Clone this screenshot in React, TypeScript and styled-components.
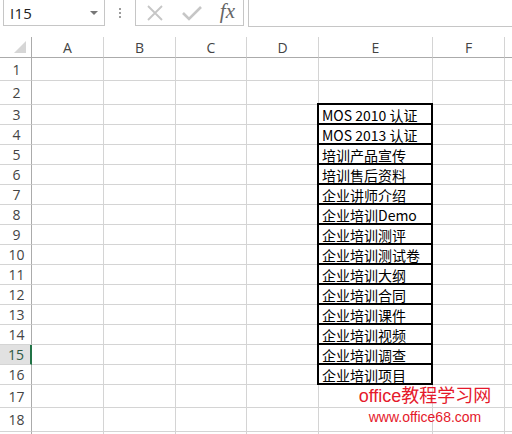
import styled, { createGlobalStyle } from "styled-components";

const GlobalStyle = createGlobalStyle`
  html, body {
    margin: 0;
    padding: 0;
    background: #ffffff;
    overflow: hidden;
  }
`;

// the last column is only a sliver at the window edge, so its letter is not shown
const columns = [
  { name: "A", width: 72 },
  { name: "B", width: 72 },
  { name: "C", width: 71 },
  { name: "D", width: 72 },
  { name: "E", width: 114 },
  { name: "F", width: 72 },
  { name: "", width: 72 },
];

const rowHeights = [23, 24, 20, 20, 20, 20, 20, 20, 20, 20, 20, 20, 20, 20, 20, 20, 23, 24, 20];
const visibleRows = 18;

const values: Record<number, string> = {
  3: "MOS 2010 认证",
  4: "MOS 2013 认证",
  5: "培训产品宣传",
  6: "培训售后资料",
  7: "企业讲师介绍",
  8: "企业培训Demo",
  9: "企业培训测评",
  10: "企业培训测试卷",
  11: "企业培训大纲",
  12: "企业培训合同",
  13: "企业培训课件",
  14: "企业培训视频",
  15: "企业培训调查",
  16: "企业培训项目",
};

const selectedRow = 15;

export default function App() {
  return (
    <>
      <GlobalStyle />
      <Page>
        <FormulaBar>
          <NameBox>
            <NameText>I15</NameText>
            <DropArrow />
          </NameBox>
          <Grip>
            <Dot />
            <Dot />
            <Dot />
          </Grip>
          <ButtonBox>
            <ToolIcon width="20" height="20" viewBox="0 0 20 20">
              <path d="M3 3 L17 17 M17 3 L3 17" stroke="#c6c6c6" strokeWidth="1.8" fill="none" />
            </ToolIcon>
            <ToolIcon width="22" height="20" viewBox="0 0 22 20">
              <path d="M2 10 L8 16 L20 4" stroke="#c6c6c6" strokeWidth="2.6" fill="none" />
            </ToolIcon>
            <FxLabel>fx</FxLabel>
          </ButtonBox>
          <FormulaInput />
        </FormulaBar>

        <Sheet
          style={{
            gridTemplateColumns: `32px ${columns.map((c) => `${c.width}px`).join(" ")}`,
            gridTemplateRows: `21px ${rowHeights.map((h) => `${h}px`).join(" ")}`,
          }}
        >
          <CornerCell>
            <svg width="14" height="14" viewBox="0 0 14 14">
              <polygon points="13,1 13,13 1,13" fill="#d6d6d6" />
            </svg>
          </CornerCell>
          {columns.map((c, i) => (
            <ColHeader key={`c${i}`}>{c.name}</ColHeader>
          ))}
          {rowHeights.map((_, i) => {
            const row = i + 1;
            return [
              <RowHeader key={`h${row}`} $selected={row === selectedRow}>
                {row <= visibleRows ? row : ""}
              </RowHeader>,
              ...columns.map((c, ci) =>
                c.name === "E" && values[row] ? (
                  <DataCell key={`${ci}-${row}`}>{values[row]}</DataCell>
                ) : (
                  <Cell key={`${ci}-${row}`} />
                )
              ),
            ];
          })}
        </Sheet>

        <Watermark>
          <WatermarkTitle>office教程学习网</WatermarkTitle>
          <WatermarkUrl>www.office68.com</WatermarkUrl>
        </Watermark>
      </Page>
    </>
  );
}

const Page = styled.div`
  position: relative;
  width: 512px;
  height: 434px;
  overflow: hidden;
  background: #ffffff;
  font-family: "Open Sans", "Noto Sans", sans-serif;
`;

const FormulaBar = styled.div`
  display: flex;
  align-items: flex-start;
  height: 37px;
  padding-left: 3px;
`;

const NameBox = styled.div`
  box-sizing: border-box;
  width: 102px;
  height: 26px;
  border: 1px solid #c6c6c6;
  border-top: none;
  display: flex;
  align-items: center;
  justify-content: space-between;
  padding: 0 6px 0 6px;
`;

const NameText = styled.span`
  font-size: 15px;
  color: #222;
  letter-spacing: 0.3px;
`;

const DropArrow = styled.span`
  width: 0;
  height: 0;
  border-left: 4px solid transparent;
  border-right: 4px solid transparent;
  border-top: 4px solid #777;
  margin-top: 1px;
`;

const Grip = styled.div`
  width: 30px;
  height: 26px;
  display: flex;
  flex-direction: column;
  align-items: center;
  justify-content: center;
  gap: 2px;
`;

const Dot = styled.span`
  width: 2px;
  height: 2px;
  background: #9c9c9c;
`;

const ButtonBox = styled.div`
  box-sizing: border-box;
  width: 109px;
  height: 26px;
  border: 1px solid #c6c6c6;
  border-top: none;
  display: flex;
  align-items: center;
  justify-content: space-between;
  padding: 0 8px 0 9px;
`;

const ToolIcon = styled.svg`
  display: block;
`;

const FxLabel = styled.span`
  font-family: "Liberation Serif", "DejaVu Serif", serif;
  font-style: italic;
  font-size: 21px;
  color: #666;
  line-height: 1;
  margin-top: -2px;
`;

const FormulaInput = styled.div`
  box-sizing: border-box;
  flex: 1;
  height: 27px;
  margin-left: 4px;
  margin-right: -2px;
  border: 1px solid #c6c6c6;
  border-top: none;
`;

const Sheet = styled.div`
  display: grid;
  color: #444;
`;

const CornerCell = styled.div`
  box-sizing: border-box;
  border-right: 1px solid #ababab;
  border-bottom: 1px solid #ababab;
  display: flex;
  align-items: flex-end;
  justify-content: flex-end;
  padding: 0 4px 3px 0;
`;

const ColHeader = styled.div`
  box-sizing: border-box;
  border-right: 1px solid #d4d4d4;
  border-bottom: 1px solid #ababab;
  display: flex;
  align-items: center;
  justify-content: center;
  font-size: 14px;
  color: #444;
`;

const RowHeader = styled.div<{ $selected?: boolean }>`
  box-sizing: border-box;
  border-right: ${(p) => (p.$selected ? "2px solid #217346" : "1px solid #ababab")};
  border-bottom: 1px solid #d4d4d4;
  background: ${(p) => (p.$selected ? "#e1e1e1" : "#ffffff")};
  color: ${(p) => (p.$selected ? "#2f5a44" : "#444")};
  display: flex;
  align-items: center;
  justify-content: center;
  font-size: 14px;
  padding-left: 2px;
`;

const Cell = styled.div`
  box-sizing: border-box;
  border-right: 1px solid #d4d4d4;
  border-bottom: 1px solid #d4d4d4;
`;

const DataCell = styled.div`
  position: relative;
  box-sizing: border-box;
  border-right: 1px solid #d4d4d4;
  border-bottom: 1px solid #d4d4d4;
  display: flex;
  align-items: center;
  padding-left: 3px;
  font-family: "Noto Sans CJK SC", sans-serif;
  font-size: 14px;
  line-height: 18px;
  color: #000;
  white-space: nowrap;

  &::after {
    content: "";
    position: absolute;
    top: -2px;
    left: -2px;
    right: -1px;
    bottom: -1px;
    border: 2px solid #000;
    z-index: 1;
    pointer-events: none;
  }
`;

const Watermark = styled.div`
  position: absolute;
  left: 345px;
  top: 385px;
  width: 160px;
  display: flex;
  flex-direction: column;
  align-items: center;
  color: #e5192b;
  font-family: "Liberation Sans", "Noto Sans CJK SC", sans-serif;
  z-index: 2;
`;

const WatermarkTitle = styled.div`
  font-size: 18px;
  line-height: 22px;
`;

const WatermarkUrl = styled.div`
  font-size: 14px;
  line-height: 18px;
  margin-top: 1px;
`;
